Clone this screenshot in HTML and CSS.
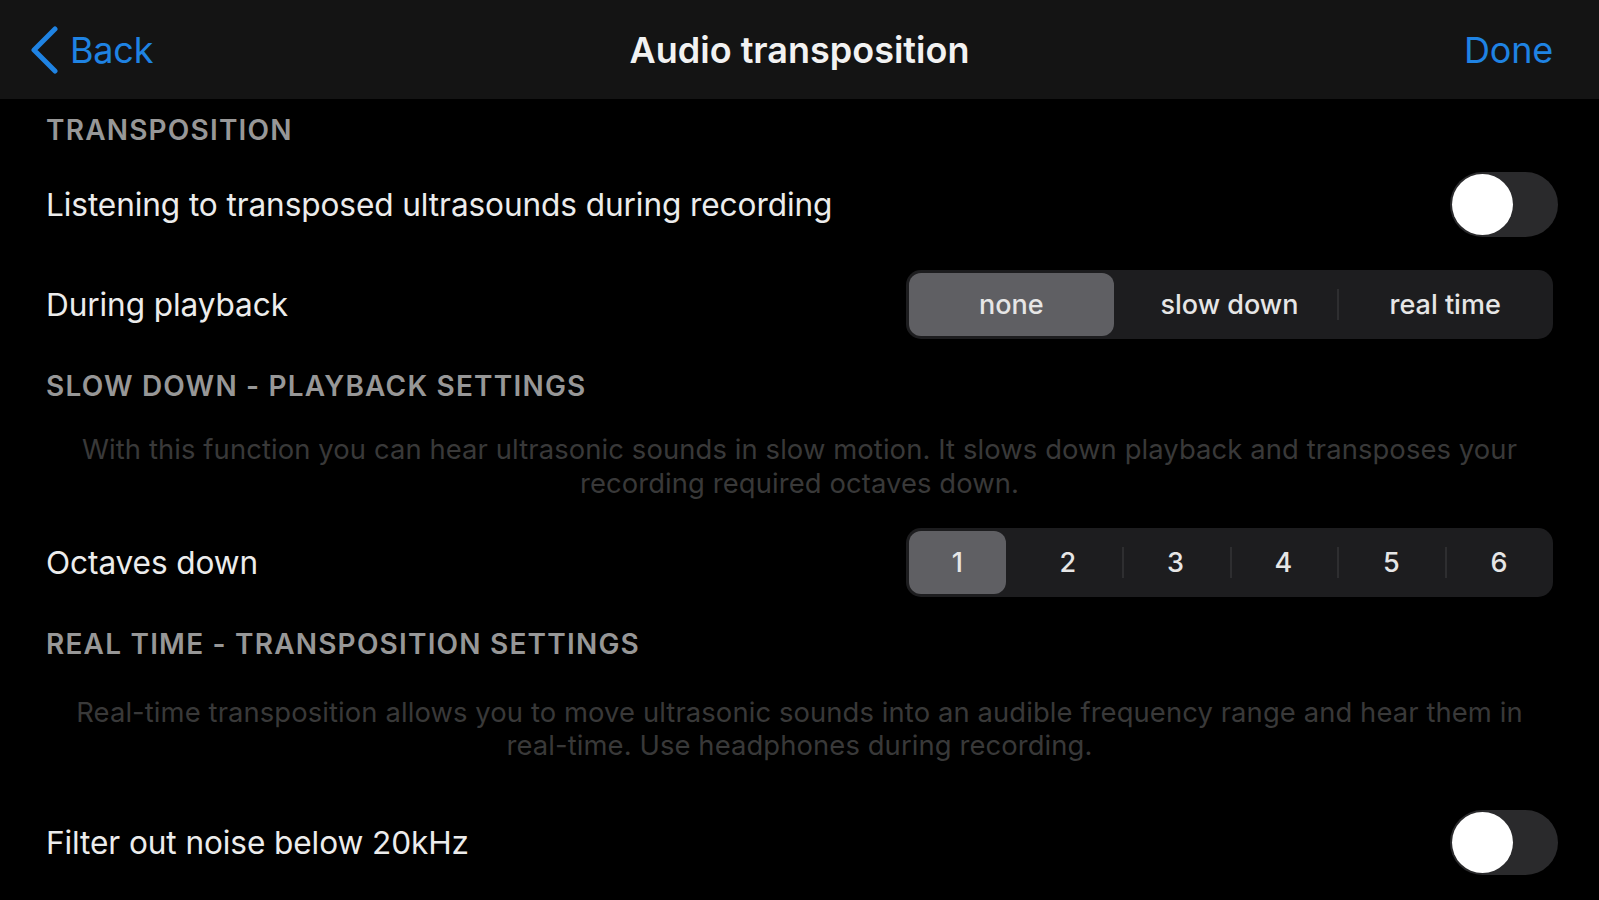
FILE: index.html
```html
<!DOCTYPE html>
<html lang="en">
<head>
<meta charset="utf-8">
<title>Audio transposition</title>
<link rel="stylesheet" href="styles.css">
</head>
<body>
<header class="nav">
  <div class="nav-left">
    <svg class="chev" width="30" height="48" viewBox="0 0 30 48"><path d="M26 3 L5 24 L26 45" fill="none" stroke="#1f83e3" stroke-width="5" stroke-linecap="round" stroke-linejoin="round"/></svg>
    <span class="nav-link">Back</span>
  </div>
  <div class="nav-title">Audio transposition</div>
  <div class="nav-right"><span class="nav-link">Done</span></div>
</header>
<main class="content">
  <div class="sec-head first">TRANSPOSITION</div>
  <div class="row">
    <span class="label">Listening to transposed ultrasounds during recording</span>
    <div class="toggle"><div class="knob"></div></div>
  </div>
  <div class="row">
    <span class="label">During playback</span>
    <div class="seg">
      <div class="seg-item sel">none</div>
      <div class="seg-item">slow down</div>
      <div class="seg-item sep">real time</div>
    </div>
  </div>
  <div class="sec-head">SLOW DOWN - PLAYBACK SETTINGS</div>
  <p class="desc d1">With this function you can hear ultrasonic sounds in slow motion. It slows down playback and transposes your recording required octaves down.</p>
  <div class="row">
    <span class="label">Octaves down</span>
    <div class="seg">
      <div class="seg-item sel">1</div>
      <div class="seg-item">2</div>
      <div class="seg-item sep">3</div>
      <div class="seg-item sep">4</div>
      <div class="seg-item sep">5</div>
      <div class="seg-item sep">6</div>
    </div>
  </div>
  <div class="sec-head">REAL TIME - TRANSPOSITION SETTINGS</div>
  <p class="desc d2">Real-time transposition allows you to move ultrasonic sounds into an audible frequency range and hear them in real-time. Use headphones during recording.</p>
  <div class="row">
    <span class="label">Filter out noise below 20kHz</span>
    <div class="toggle"><div class="knob"></div></div>
  </div>
</main>
</body>
</html>
```

FILE: styles.css
```css
* { box-sizing: border-box; }
html, body { margin: 0; padding: 0; }
body {
  background: #000;
  width: 1599px;
  height: 900px;
  overflow: hidden;
  font-family: Inter, "Noto Sans", "Liberation Sans", sans-serif;
  color: #ececec;
}
.nav {
  height: 99px;
  background: #141414;
  display: grid;
  grid-template-columns: 1fr auto 1fr;
  align-items: center;
  padding: 0 46px;
}
.nav-left { display: flex; align-items: center; gap: 11px; margin-left: -17px; }
.chev { display: block; margin-top: 1px; }
.nav-link { color: #1f83e3; font-size: 36px; letter-spacing: -0.2px; }
.nav-title { color: #f2f2f2; font-size: 36px; font-weight: 600; letter-spacing: 0; }
.nav-right { display: flex; justify-content: flex-end; }
.content { padding: 0 46px; }
.sec-head {
  color: #979797;
  font-size: 28px;
  font-weight: 600;
  line-height: 34px;
  padding: 15px 0 15px;
  letter-spacing: 1.2px;
}
.sec-head.first { padding: 14px 0 7px; }
.row {
  height: 100px;
  display: flex;
  align-items: center;
  justify-content: space-between;
}
.label { font-size: 31.6px; letter-spacing: -0.1px; }
.desc {
  margin: 0;
  text-align: center;
  color: #393939;
  font-size: 27.4px;
  line-height: 34px;
  letter-spacing: 0.1px;
}
.d1 { padding: 14px 0 12px; }
.d2 { padding: 20px 0 30px; line-height: 33px; }
.toggle {
  width: 108px;
  height: 65px;
  border-radius: 33px;
  background: #2a2a2c;
  margin-right: -5px;
  padding: 2px;
}
.knob {
  width: 61px;
  height: 61px;
  border-radius: 50%;
  background: #fff;
}
.seg {
  width: 647px;
  height: 69px;
  background: #1d1d1f;
  border-radius: 15px;
  padding: 3px 0;
  display: grid;
  grid-auto-flow: column;
  grid-auto-columns: 1fr;
}
.seg-item {
  position: relative;
  display: flex;
  align-items: center;
  justify-content: center;
  font-size: 27px;
  font-weight: 500;
  color: #e6e6e6;
  border-radius: 12px;
}
.seg-item.sel { background: #5f5f63; margin: 0 8px 0 3px; }
.seg-item.sep::before {
  content: "";
  position: absolute;
  left: 0;
  top: 16px;
  bottom: 16px;
  width: 2px;
  background: #2e2e30;
}
```
